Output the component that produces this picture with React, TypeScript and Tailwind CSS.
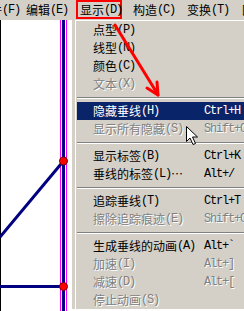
const cjk = "font-['Noto_Sans_CJK_SC',sans-serif] text-[12px] leading-none";
const lat = "font-['Liberation_Mono',monospace] text-[12px] tracking-[-1.2px] leading-none";

type Entry =
  | { zh: string; k: string; tail?: string; sc?: string; off?: boolean; hi?: boolean }
  | "sep";

const entries: Entry[] = [
  { zh: "点型", k: "(P)" },
  { zh: "线型", k: "(N)" },
  { zh: "颜色", k: "(C)" },
  { zh: "文本", k: "(X)", off: true },
  "sep",
  { zh: "隐藏垂线", k: "(H)", sc: "Ctrl+H", hi: true },
  { zh: "显示所有隐藏", k: "(S)", sc: "Shift+Ctrl+H", off: true },
  "sep",
  { zh: "显示标签", k: "(B)", sc: "Ctrl+K" },
  { zh: "垂线的标签", k: "(L)", tail: "…", sc: "Alt+/" },
  "sep",
  { zh: "追踪垂线", k: "(T)", sc: "Ctrl+T" },
  { zh: "擦除追踪痕迹", k: "(E)", sc: "Shift+Ctrl+E", off: true },
  "sep",
  { zh: "生成垂线的动画", k: "(A)", sc: "Alt+`" },
  { zh: "加速", k: "(I)", sc: "Alt+]", off: true },
  { zh: "减速", k: "(D)", sc: "Alt+[", off: true },
  { zh: "停止动画", k: "(S)", off: true },
];

function Label({ zh, k, tail }: { zh: string; k: string; tail?: string }) {
  return (
    <span className="flex items-center whitespace-nowrap shrink-0">
      <span className={cjk}>{zh}</span>
      <span className={lat}>{k}</span>
      {tail && <span className={cjk}>{tail}</span>}
    </span>
  );
}

function MenuBar() {
  return (
    <div className="flex h-[20px] items-center bg-[#d4d0c8] whitespace-nowrap overflow-hidden text-black">
      <div className="w-[20px] shrink-0 flex justify-end overflow-hidden">
        <Label zh="文件" k="(F)" />
      </div>
      <div className="ml-[6px] w-[50px] shrink-0">
        <Label zh="编辑" k="(E)" />
      </div>
      <div className="w-[46px] h-[19px] shrink-0 self-start border-2 border-[#ff0000] pl-[2px] flex items-center">
        <Label zh="显示" k="(D)" />
      </div>
      <div className="ml-[11px] w-[54px] shrink-0">
        <Label zh="构造" k="(C)" />
      </div>
      <div className="w-[55px] shrink-0">
        <Label zh="变换" k="(T)" />
      </div>
      <div className="shrink-0">
        <Label zh="图表" k="(G)" />
      </div>
    </div>
  );
}

function Canvas() {
  return (
    <svg width={244} height={291} className="block">
      <line x1={0.5} y1={0} x2={0.5} y2={291} stroke="#000" strokeWidth={1} />
      <rect x={60} y={0} width={1} height={291} fill="#ff00ff" />
      <rect x={62} y={0} width={3} height={291} fill="#000080" />
      <rect x={66} y={0} width={1} height={291} fill="#ff00ff" />
      <line x1={63.5} y1={141} x2={0} y2={217} stroke="#000080" strokeWidth={3} />
      <line x1={0} y1={266.5} x2={63.5} y2={266.5} stroke="#000080" strokeWidth={3} />
      <circle cx={63.5} cy={141} r={4} fill="#ff0000" stroke="#800000" strokeWidth={1} />
      <circle cx={63.5} cy={266.5} r={4} fill="#ff0000" stroke="#800000" strokeWidth={1} />
    </svg>
  );
}

function DropMenu() {
  return (
    <div className="absolute top-[19px] left-[72px] w-[200px] bg-[#d4d0c8] border-l-[3px] border-t border-[#d4d0c8]">
      <div className="border-l border-t border-white pl-[1px]">
        {entries.map((e, i) =>
          e === "sep" ? (
            <div key={i} className="h-[9px] flex flex-col justify-center">
              <div className="border-t border-[#808080]" />
              <div className="border-t border-white" />
            </div>
          ) : (
            <div
              key={i}
              className={`flex items-center h-[18px] pl-[16px] whitespace-nowrap ${
                e.hi
                  ? "bg-[#0a246a] text-white"
                  : e.off
                  ? "text-[#808080] [text-shadow:1px_1px_0_#ffffff]"
                  : "text-black"
              }`}
            >
              <div className="w-[111px] shrink-0 flex items-center">
                <Label zh={e.zh} k={e.k} tail={e.tail} />
              </div>
              {e.sc && <span className={lat}>{e.sc}</span>}
            </div>
          )
        )}
      </div>
    </div>
  );
}

export default function App() {
  return (
    <div className="relative w-[244px] h-[311px] overflow-hidden bg-white">
      <MenuBar />
      <Canvas />
      <DropMenu />
      {/* red annotation arrow */}
      <svg width={244} height={311} className="absolute inset-0 pointer-events-none">
        <g stroke="#ff0000" strokeWidth={3} strokeLinecap="round" fill="none">
          <line x1={115} y1={25} x2={157} y2={93} />
          <line x1={158} y1={95} x2={147} y2={88} />
          <line x1={158} y1={95} x2={157} y2={82} />
        </g>
      </svg>
      {/* mouse pointer */}
      <svg width={13} height={20} className="absolute left-[186px] top-[126px] pointer-events-none">
        <polygon
          points="0.5,0.5 0.5,15.5 4,12 7,18.5 9.5,17.5 6.5,11 11.5,11"
          fill="#ffffff"
          stroke="#000000"
          strokeWidth={1}
          strokeLinejoin="miter"
        />
      </svg>
    </div>
  );
}
